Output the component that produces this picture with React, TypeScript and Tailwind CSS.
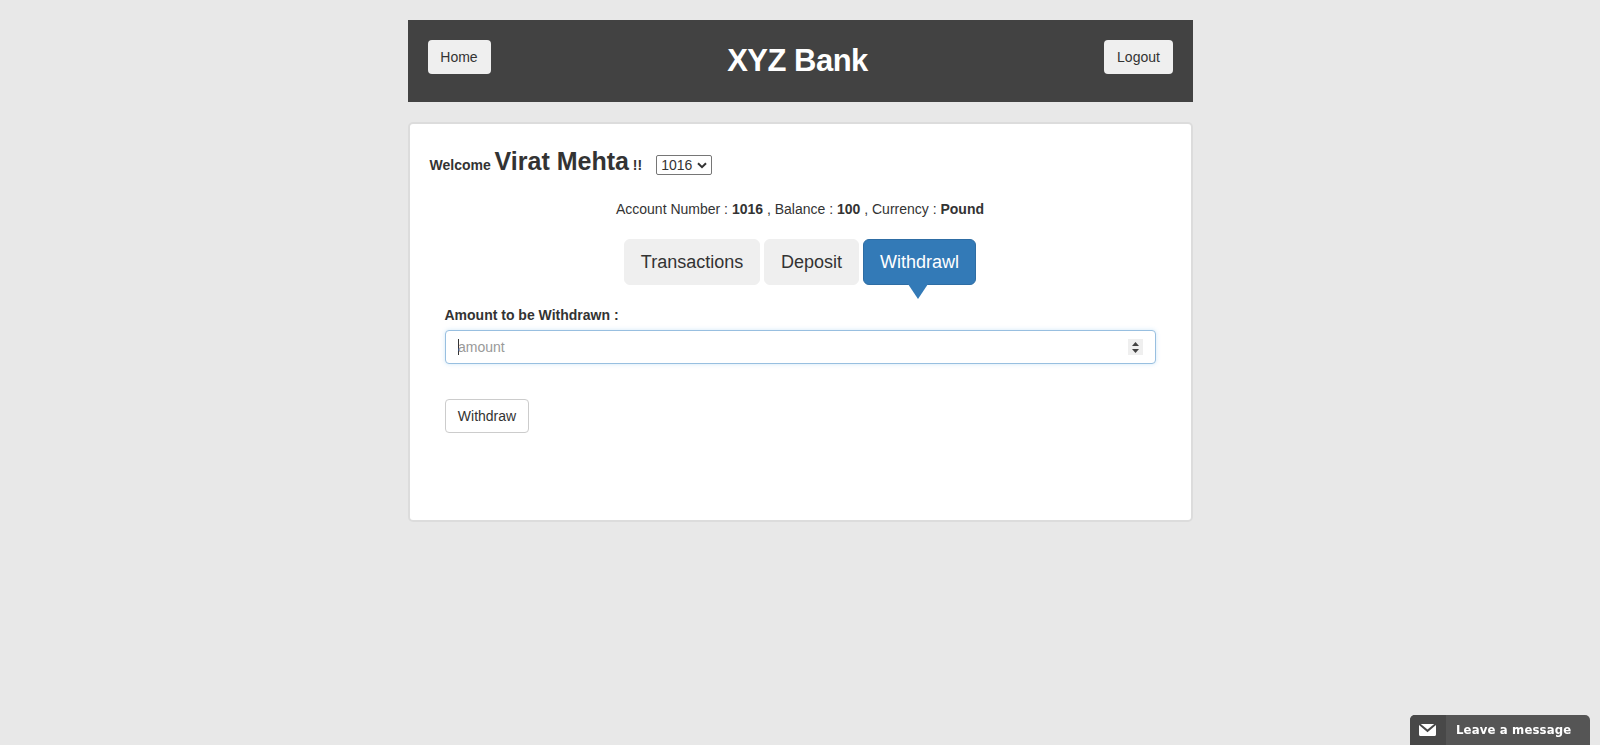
import React from "react";

const topButton =
  "h-[34px] rounded-[4px] bg-[#efefef] text-center text-[14px] leading-5 text-[#333]";
const tab =
  "relative h-[46px] rounded-[6px] border text-[18px] leading-6";

function Header() {
  return (
    <header className="flex h-[82px] items-start justify-between bg-[#424242] p-5">
      <button className={`${topButton} w-[63px] pr-px`}>Home</button>
      <strong className="pt-[3px] text-[31px] leading-[36px] font-bold tracking-[-0.5px] text-white">
        XYZ Bank
      </strong>
      <button className={`${topButton} w-[69px]`}>Logout</button>
    </header>
  );
}

function AccountSelect() {
  return (
    <div className="mt-[7px] ml-[14px] flex h-5 w-14 items-center justify-between rounded-[2px] border border-[#767676] pr-[4px] pl-[4px] text-[14px] leading-[18px]">
      <span>1016</span>
      <svg width="10" height="7" viewBox="0 0 10 7" fill="none">
        <path d="M1 1.2 5 5.2 9 1.2" stroke="#333" strokeWidth="2" />
      </svg>
    </div>
  );
}

function AmountInput() {
  return (
    <div className="flex h-[34px] items-center justify-between rounded-[4px] border border-[#98bfe0] bg-white pr-[12px] pl-3 shadow-[0_0_4px_rgba(102,175,233,0.3)]">
      <div className="flex items-center text-[14px] leading-5 text-[#999]">
        <span className="-mr-px h-4 w-px bg-[#333]" />
        <span>amount</span>
      </div>
      <div className="flex h-4 w-[15px] items-center justify-center bg-[#efefef]">
        <svg width="7" height="11" viewBox="0 0 7 11" fill="#424242">
          <path d="M0 4 3.5 0 7 4zM0 7h7L3.5 11z" />
        </svg>
      </div>
    </div>
  );
}

function ChatTab() {
  return (
    <div className="fixed right-[10px] bottom-0 flex h-[30px] w-[180px] overflow-hidden rounded-t-[5px] bg-[#555]">
      <div className="flex w-9 items-center justify-center bg-[#484848] pr-px">
        <svg width="17" height="12" viewBox="0 0 17 12" fill="#fff">
          <path d="M1.8 0h13.4L8.5 5.4z" />
          <path d="M0 1 8.5 8.2 17 1v9.4a1.6 1.6 0 0 1-1.6 1.6H1.6A1.6 1.6 0 0 1 0 10.4z" />
        </svg>
      </div>
      <span className="pl-[10px] font-['DejaVu_Sans_Condensed','DejaVu_Sans',sans-serif] text-[13px] leading-[29px] font-bold tracking-[0.15px] whitespace-nowrap text-white">
        Leave a message
      </span>
    </div>
  );
}

export default function App() {
  return (
    <div className="min-h-screen bg-[#e8e8e8] pt-5 font-['Liberation_Sans',Arial,sans-serif] text-[14px] leading-5 text-[#333]">
      <div className="ml-[408px] w-[785px]">
        <Header />
        <main className="mt-5 h-[400px] rounded-[5px] border-2 border-[#dcdcdc] bg-white px-[19px] pt-[19px]">
          <div className="flex h-[36px] items-start">
            <strong className="pl-[0.5px] leading-[36px] whitespace-nowrap">
              Welcome <span className="text-[25px]">Virat Mehta</span> !!
            </strong>
            <div className="mt-[5px]">
              <AccountSelect />
            </div>
          </div>
          <p className="mt-[20px] pr-px text-center">
            Account Number : <strong>1016</strong> , Balance : <strong>100</strong> , Currency :{" "}
            <strong>Pound</strong>
          </p>
          <nav className="mt-5 flex justify-center gap-1 pr-px">
            <button className={`${tab} w-[136px] border-[#efefef] bg-[#efefef]`}>Transactions</button>
            <button className={`${tab} w-[95px] border-[#efefef] bg-[#efefef]`}>Deposit</button>
            <button className={`${tab} w-[113px] border-[#2e6da4] bg-[#337ab7] text-white`}>
              Withdrawl
              <svg
                className="absolute top-[44px] left-[44px]"
                width="20"
                height="15"
                viewBox="0 0 20 15"
                fill="#337ab7"
              >
                <path d="M0 0h20L10 15z" />
              </svg>
            </button>
          </nav>
          <form className="mt-5 px-4">
            <label className="mb-[5px] -ml-[0.5px] block font-bold">Amount to be Withdrawn :</label>
            <AmountInput />
            <button
              type="button"
              className="mt-[35px] h-[34px] w-[84px] rounded-[4px] border border-[#ccc] bg-white"
            >
              Withdraw
            </button>
          </form>
        </main>
      </div>
      <ChatTab />
    </div>
  );
}
